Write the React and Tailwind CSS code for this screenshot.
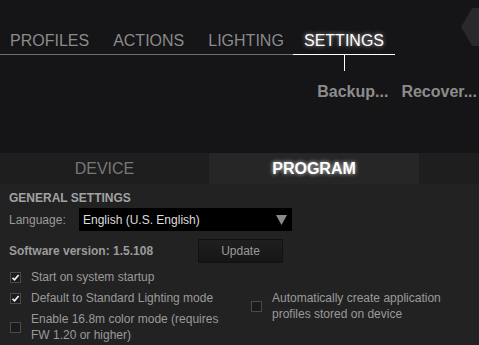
import React from 'react';

const tabs = ['PROFILES', 'ACTIONS', 'LIGHTING'];

const Check = ({ checked }) => (
  <span className="flex h-[11px] w-[11px] shrink-0 items-center justify-center border border-[#4a4a4a] bg-[#1b1b1b]">
    {checked && (
      <svg width="9" height="9" viewBox="0 0 9 9">
        <path d="M1.5 4.8 L3.6 6.8 L7.6 2" fill="none" stroke="#eeeeee" strokeWidth="1.8" />
      </svg>
    )}
  </span>
);

const App = () => {
  return (
    <div className="h-[345px] w-[479px] overflow-hidden bg-[#151416] font-['Liberation_Sans',Arial,sans-serif]">
      {/* Top nav */}
      <div className="relative h-[153px]">
        <div className="absolute right-[-14px] top-[8px] h-[38px] w-[32px] bg-[#29292b] [clip-path:polygon(35%_0,100%_0,100%_100%,35%_100%,0_50%)]" />
        <div className="flex items-end pt-[32px]">
          <div className="flex h-[23px] w-[293px] items-start gap-[24px] border-b border-[#6e6e6e] pl-[10px] text-[16px] leading-[18px] text-[#8b8b8b]">
            {tabs.map(t => (
              <span key={t}>{t}</span>
            ))}
          </div>
          <div className="relative flex h-[23px] w-[102px] items-start justify-center border-b border-white text-[16px] leading-[18px] text-white [text-shadow:0_0_4px_rgba(255,255,255,0.7)]">
            SETTINGS
            <span className="absolute left-[51px] top-[23px] h-[16px] w-px bg-white" />
          </div>
        </div>
        <div className="mt-[28px] flex justify-end gap-[13px] pr-[2px] text-[16px] font-bold leading-[18px] text-[#8c8c8c]">
          <span>Backup...</span>
          <span>Recover...</span>
        </div>
      </div>

      {/* Lower panel */}
      <div className="h-[192px] bg-[#222222]">
        <div className="flex h-[31px] bg-[#1e1e1e]">
          <div className="flex w-[209px] items-center justify-center text-[16px] text-[#777777]">DEVICE</div>
          <div className="flex w-[210px] items-center justify-center bg-[#262626] text-[16px] font-bold text-white [text-shadow:0_0_4px_rgba(255,255,255,0.8)]">
            PROGRAM
          </div>
        </div>

        <div className="px-[9px] pt-[7px] text-[12px] leading-[14px]">
          <div className="font-bold text-[#a2a2a2]">GENERAL SETTINGS</div>
          <div className="mt-[3px] flex items-center">
            <span className="w-[70px] text-[#9a9a9a]">Language:</span>
            <div className="flex h-[23px] w-[213px] items-center justify-between bg-black pl-[4px] pr-[5px] text-[#dddddd]">
              <span>English (U.S. English)</span>
              <svg width="11" height="10" viewBox="0 0 11 10">
                <path d="M0 0 H11 L5.5 10 Z" fill="#8a8a8a" />
              </svg>
            </div>
          </div>
          <div className="mt-[8px] flex items-center">
            <span className="w-[189px] font-bold text-[#9c9c9c]">Software version: 1.5.108</span>
            <button className="h-[24px] w-[85px] border border-[#111] bg-gradient-to-b from-[#1f1f1f] to-[#161616] text-[12px] text-[#9a9a9a]">
              Update
            </button>
          </div>

          <div className="mt-[6px] flex text-[#9a9a9a]">
            <div className="flex w-[242px] flex-col gap-[5px]">
              <div className="flex items-center gap-[10px] pl-[1px]">
                <Check checked />
                <span className="leading-[16px]">Start on system startup</span>
              </div>
              <div className="flex items-center gap-[10px] pl-[1px]">
                <Check checked />
                <span className="leading-[16px]">Default to Standard Lighting mode</span>
              </div>
              <div className="flex items-center gap-[10px] pl-[1px]">
                <Check />
                <span className="leading-[16px]">
                  Enable 16.8m color mode (requires
                  <br />
                  FW 1.20 or higher)
                </span>
              </div>
            </div>
            <div className="mt-[21px] flex items-center gap-[10px] self-start">
              <Check />
              <span className="leading-[16px]">
                Automatically create application
                <br />
                profiles stored on device
              </span>
            </div>
          </div>
        </div>
      </div>
    </div>
  );
};

export default App;
